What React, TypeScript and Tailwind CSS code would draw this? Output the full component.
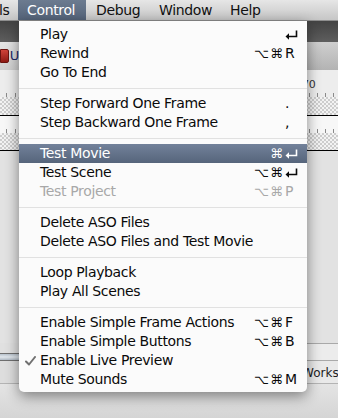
import React from "react";

type Item =
  | "sep"
  | {
      label: string;
      mods?: string[];
      k?: string;
      hl?: boolean;
      disabled?: boolean;
      checked?: boolean;
    };

const items: Item[] = [
  { label: "Play", k: "ret" },
  { label: "Rewind", mods: ["⌥", "⌘"], k: "R" },
  { label: "Go To End" },
  "sep",
  { label: "Step Forward One Frame", k: "." },
  { label: "Step Backward One Frame", k: "," },
  "sep",
  { label: "Test Movie", mods: ["⌘"], k: "ret", hl: true },
  { label: "Test Scene", mods: ["⌥", "⌘"], k: "ret" },
  { label: "Test Project", mods: ["⌥", "⌘"], k: "P", disabled: true },
  "sep",
  { label: "Delete ASO Files" },
  { label: "Delete ASO Files and Test Movie" },
  "sep",
  { label: "Loop Playback" },
  { label: "Play All Scenes" },
  "sep",
  { label: "Enable Simple Frame Actions", mods: ["⌥", "⌘"], k: "F" },
  { label: "Enable Simple Buttons", mods: ["⌥", "⌘"], k: "B" },
  { label: "Enable Live Preview", checked: true },
  { label: "Mute Sounds", mods: ["⌥", "⌘"], k: "M" },
];

function ReturnIcon({ color }: { color: string }) {
  return (
    <svg width="13" height="10" viewBox="0 0 13 10" className="mt-[1px]">
      <path d="M11.5 0.5 V6.5 H3" stroke={color} strokeWidth="1.6" fill="none" />
      <path d="M0.5 6.5 L4 3.2 L4 9.8 Z" fill={color} />
    </svg>
  );
}

function CheckIcon() {
  return (
    <svg width="11" height="10" viewBox="0 0 11 10">
      <path d="M1 5.5 L4 8.5 L10 1" stroke="#707070" strokeWidth="2" fill="none" strokeLinejoin="round" strokeLinecap="round" />
    </svg>
  );
}

function Ticks({ xs }: { xs: number[] }) {
  return (
    <>
      {xs.map((x) => (
        <div key={x} className="absolute bottom-0 w-px h-[4px] bg-[#8a8a8a]" style={{ left: x }} />
      ))}
    </>
  );
}

export default function App() {
  const checker =
    "bg-[repeating-conic-gradient(#cdcdcd_0_25%,#f3f3f3_0_50%)] bg-[length:4px_4px]";
  return (
    <div className="relative w-[338px] h-[418px] overflow-hidden bg-[#e3e3e3] font-['DejaVu_Sans',sans-serif] tracking-[-0.35px] text-[14px]">
      {/* Menu bar */}
      <div className="h-[21px] flex items-stretch bg-[linear-gradient(#e6e6e6,#c6c6c6)] border-b border-[#8e8e8e] text-[#111]">
        <div className="w-[19px] flex items-center -ml-[1px]">ls</div>
        <div className="w-[68px] flex items-center pl-[9px] text-white bg-[linear-gradient(#6c7b90,#55647a)]">
          Control
        </div>
        <div className="w-[63px] flex items-center pl-[10px]">Debug</div>
        <div className="w-[71px] flex items-center pl-[10px]">Window</div>
        <div className="flex items-center pl-[10px]">Help</div>
      </div>

      {/* Background application window */}
      <div className="h-[21px] bg-[linear-gradient(#434343,#5e5e5e)]" />
      <div className="h-[28px] flex bg-[linear-gradient(#cfcfcf,#b3b3b3)]">
        <div className="w-[19px] flex items-center bg-[linear-gradient(#e4e4e4,#cfcfcf)]">
          <div className="w-[10px] h-[14px] rounded-r-[2px] bg-[linear-gradient(#d0433a,#8e1a14)] border border-[#6b1410]" />
          <span className="ml-[1px] text-[#1d2a6a] text-[13px]">U</span>
        </div>
      </div>
      <div className="relative h-[27px] bg-[#ededed]">
        <span className="absolute left-[302px] top-[7px] text-[11px] text-[#333]">70</span>
        <Ticks xs={[6, 15, 309, 317, 325, 333]} />
      </div>
      <div className={`h-[19px] border-b border-black ${checker}`} />
      <div className="relative h-[17px] bg-[#f7f7f7]">
        <Ticks xs={[6, 15, 309, 317, 325, 333]} />
      </div>
      <div className={`h-[18px] border-b border-black ${checker}`} />
      <div className="h-[192px] bg-[#e2e2e2]" />
      <div className="h-[10px] flex">
        <div className="w-[19px] bg-[#e0e0e0]" />
        <div className="flex-1 border-t border-[#a9a9a9] bg-[#ececec]" />
      </div>
      <div className="h-[8px] flex">
        <div className="w-[19px] border-y border-[#6f6f6f] bg-[linear-gradient(#b8c2cc,#e0e6ec,#b0bac4)]" />
        <div className="flex-1 border-b border-[#a9a9a9] bg-[#ececec]" />
      </div>
      <div className="h-[23px] flex border-b border-[#b4b4b4]">
        <div className="w-[19px] bg-[#dddddd]" />
        <div className="flex-1 bg-[#e9e9e9] relative">
          <span className="absolute left-[283px] top-[3px] text-[12px] text-[#222] tracking-normal">Workspa</span>
        </div>
      </div>
      <div className="h-[40px] bg-[linear-gradient(#e4e4e4,#d2d2d2)]" />

      {/* Dropdown menu */}
      <div className="absolute left-[19px] top-[21px] w-[288px] pt-[4px] pb-[3px] bg-[#fbfbfb] rounded-b-[5px] shadow-[0_4px_14px_rgba(0,0,0,0.45)]">
        {items.map((it, i) => {
          if (it === "sep")
            return (
              <div key={i} className="h-[12px] pt-[6px]">
                <div className="h-px bg-[#e1e1e1]" />
              </div>
            );
          const color = it.hl ? "#ffffff" : it.disabled ? "#a8a8a8" : "#0a0a0a";
          return (
            <div
              key={i}
              className={`relative h-[19px] flex items-center pl-[21px] pr-[8px] ${
                it.hl ? "bg-[linear-gradient(#72819a,#56657b)]" : ""
              }`}
              style={{ color }}
            >
              {it.checked && (
                <div className="absolute left-[6px] top-[5px]">
                  <CheckIcon />
                </div>
              )}
              <span className="flex-1 leading-[19px]">{it.label}</span>
              <div className="flex">
                {(it.mods || []).map((m) => (
                  <span key={m} className="w-[15px] text-center text-[13px] tracking-normal">
                    {m}
                  </span>
                ))}
              </div>
              <span className="w-[14px] ml-[1px] flex items-center tracking-normal">
                {it.k === "ret" ? <ReturnIcon color={color} /> : it.k || ""}
              </span>
            </div>
          );
        })}
      </div>
    </div>
  );
}
